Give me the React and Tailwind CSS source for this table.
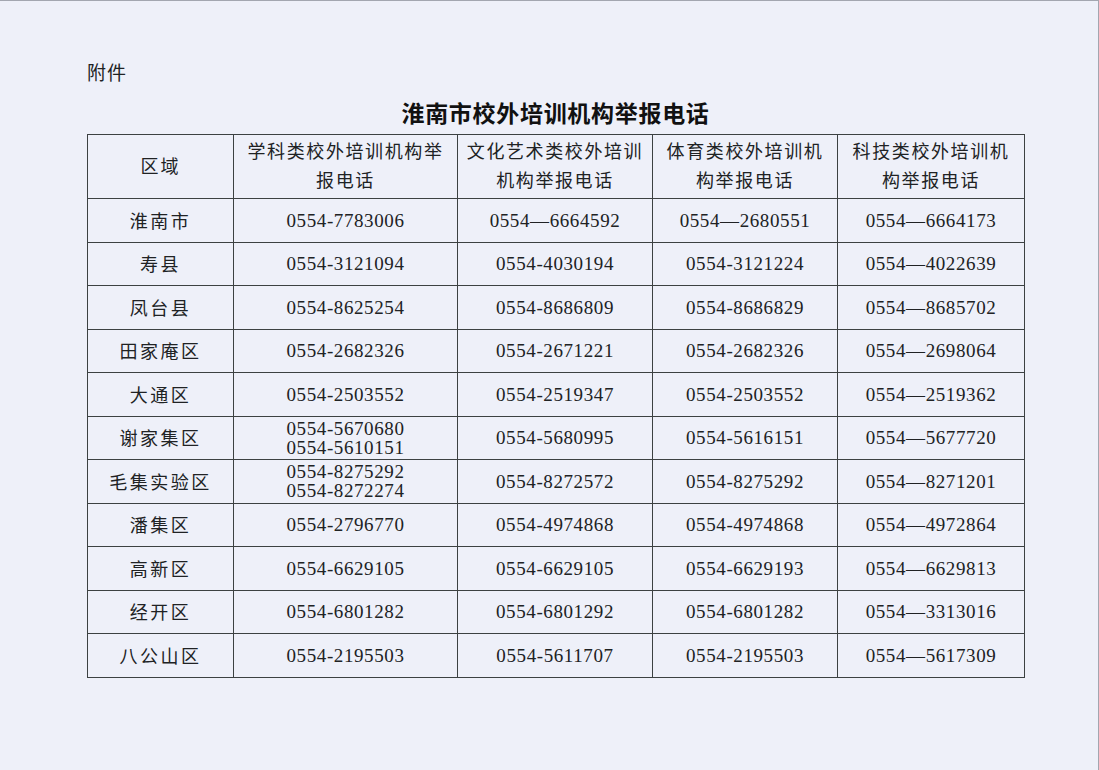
const rows = [
  { area: '淮南市', phones: [['0554-7783006'], ['0554—6664592'], ['0554—2680551'], ['0554—6664173']] },
  { area: '寿县', phones: [['0554-3121094'], ['0554-4030194'], ['0554-3121224'], ['0554—4022639']] },
  { area: '凤台县', phones: [['0554-8625254'], ['0554-8686809'], ['0554-8686829'], ['0554—8685702']] },
  { area: '田家庵区', phones: [['0554-2682326'], ['0554-2671221'], ['0554-2682326'], ['0554—2698064']] },
  { area: '大通区', phones: [['0554-2503552'], ['0554-2519347'], ['0554-2503552'], ['0554—2519362']] },
  { area: '谢家集区', phones: [['0554-5670680', '0554-5610151'], ['0554-5680995'], ['0554-5616151'], ['0554—5677720']] },
  { area: '毛集实验区', phones: [['0554-8275292', '0554-8272274'], ['0554-8272572'], ['0554-8275292'], ['0554—8271201']] },
  { area: '潘集区', phones: [['0554-2796770'], ['0554-4974868'], ['0554-4974868'], ['0554—4972864']] },
  { area: '高新区', phones: [['0554-6629105'], ['0554-6629105'], ['0554-6629193'], ['0554—6629813']] },
  { area: '经开区', phones: [['0554-6801282'], ['0554-6801292'], ['0554-6801282'], ['0554—3313016']] },
  { area: '八公山区', phones: [['0554-2195503'], ['0554-5611707'], ['0554-2195503'], ['0554—5617309']] },
]

const headers = [
  ['学科类校外培训机构举', '报电话'],
  ['文化艺术类校外培训', '机构举报电话'],
  ['体育类校外培训机', '构举报电话'],
  ['科技类校外培训机', '构举报电话'],
]

const cjk = "font-['Noto_Sans_CJK_SC',sans-serif]"
const cell = 'border border-[#3c4142] text-center align-middle p-0'

export default function App() {
  return (
    <div className="w-[1099px] h-[770px] overflow-hidden bg-[#eef0f9] border-t border-r border-[#a3a6b0] text-[#202224]">
      <div className="pl-[87px] pt-[59px]">
        <div className={`${cjk} text-[19px] leading-[24px] tracking-[1px]`}>附件</div>
        <div className={`w-[937px] mt-[13px] text-center ${cjk} font-bold text-[23px] leading-[30px] tracking-[0.7px] text-[#111]`}>
          淮南市校外培训机构举报电话
        </div>
        <table className="mt-[7px] border-collapse table-fixed w-[937px]">
          <colgroup>
            <col className="w-[146px]" />
            <col className="w-[224px]" />
            <col className="w-[195px]" />
            <col className="w-[185px]" />
            <col className="w-[187px]" />
          </colgroup>
          <thead>
            <tr className="h-[64px]">
              <th className={`${cell} ${cjk} font-normal text-[18px] tracking-[2px] pb-[3px]`}>区域</th>
              {headers.map((h, i) => (
                <th key={i} className={`${cell} ${cjk} font-normal text-[18px] leading-[29px] tracking-[1.6px] pb-[4px]`}>
                  <div>{h[0]}</div>
                  <div>{h[1]}</div>
                </th>
              ))}
            </tr>
          </thead>
          <tbody>
            {rows.map((r) => (
              <tr key={r.area} className="h-[43.5px]">
                <td className={`${cell} ${cjk} text-[18px] tracking-[2.5px]`}>{r.area}</td>
                {r.phones.map((p, i) => (
                  <td key={i} className={`${cell} font-['Liberation_Serif',serif] text-[19px] tracking-[0.6px] leading-[19px]`}>
                    {p.map((n) => (
                      <div key={n}>{n}</div>
                    ))}
                  </td>
                ))}
              </tr>
            ))}
          </tbody>
        </table>
      </div>
    </div>
  )
}
